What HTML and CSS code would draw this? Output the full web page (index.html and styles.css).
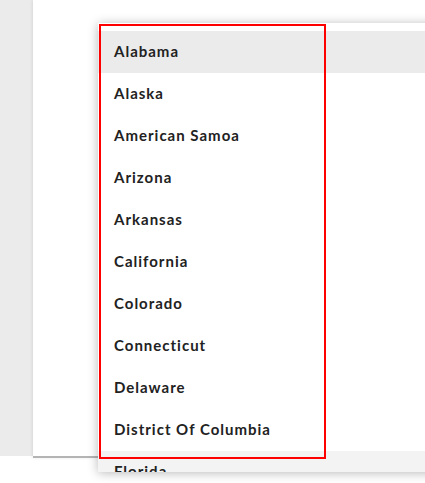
FILE: index.html
```html
<!DOCTYPE html>
<html lang="en">
<head>
<meta charset="utf-8">
<title>State select</title>
<link rel="stylesheet" href="styles.css">
</head>
<body>
<div class="layout">
  <div class="sidebar"></div>
  <div class="panel">
    <div class="panel-head"><span class="head-text">Show items</span></div>
    <ul class="dropdown">
      <li class="option active">Alabama</li>
      <li class="option">Alaska</li>
      <li class="option">American Samoa</li>
      <li class="option">Arizona</li>
      <li class="option">Arkansas</li>
      <li class="option">California</li>
      <li class="option">Colorado</li>
      <li class="option">Connecticut</li>
      <li class="option">Delaware</li>
      <li class="option">District Of Columbia</li>
      <li class="option fade">Florida</li>
    </ul>
  </div>
</div>
<div class="highlight"></div>
</body>
</html>
```
FILE: styles.css
```css
html, body {
  margin: 0;
  padding: 0;
  background: #ffffff;
}
body {
  width: 425px;
  height: 483px;
  overflow: hidden;
  position: relative;
  font-family: "Lato", "Liberation Sans", sans-serif;
}
.layout {
  display: flex;
  height: 458px;
}
.sidebar {
  width: 33px;
  flex: none;
  background: #ebebeb;
  margin-bottom: 2px;
}
.panel {
  flex: 1;
  position: relative;
  background: #ffffff;
  border-bottom: 2px solid #b4b4b4;
  box-shadow: -1px 0 3px rgba(0, 0, 0, 0.08);
}
.panel-head {
  padding: 19px 0 0 324px;
  white-space: nowrap;
  overflow: hidden;
}
.head-text {
  font-weight: 700;
  font-size: 15px;
  line-height: 15px;
  letter-spacing: 1px;
  color: #2a2a2a;
}
.dropdown {
  position: absolute;
  left: 65px;
  top: 23px;
  width: 340px;
  height: 449px;
  margin: 0;
  padding: 8px 0 0 0;
  box-sizing: border-box;
  list-style: none;
  background: #ffffff;
  overflow: hidden;
  box-shadow: 0 1px 10px rgba(0, 0, 0, 0.28);
}
.option {
  height: 42px;
  display: flex;
  align-items: center;
  padding-left: 16px;
  font-weight: 700;
  font-size: 15px;
  letter-spacing: 1px;
  color: #222222;
  padding-bottom: 2px;
  box-sizing: border-box;
}
.option.active {
  background: #ebebeb;
}
.option.fade {
  background: #f3f3f3;
}
.highlight {
  position: absolute;
  left: 99px;
  top: 24px;
  width: 227px;
  height: 435px;
  box-sizing: border-box;
  border: 2px solid #ff0000;
}
```
